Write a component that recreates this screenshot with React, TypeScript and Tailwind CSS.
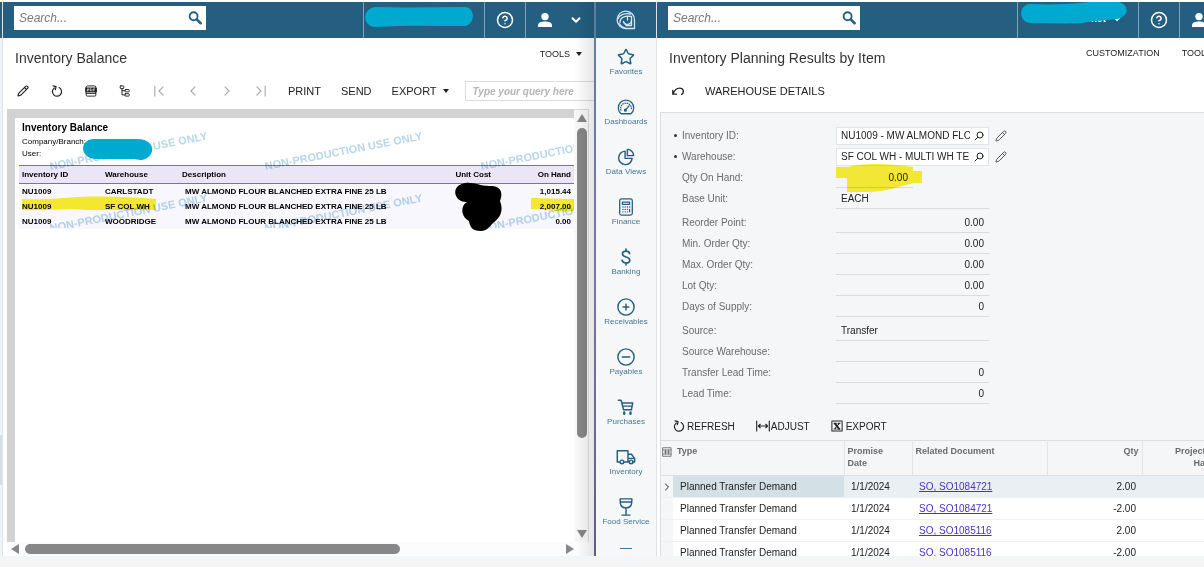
import type { ReactNode } from "react";
import { ChevronDown, ChevronRight, CircleHelp, Pencil, Star } from "lucide-react";

const reportRows = [
  { id: "NU1009", warehouse: "CARLSTADT", description: "MW ALMOND FLOUR BLANCHED EXTRA FINE 25 LB", onHand: "1,015.44" },
  { id: "NU1009", warehouse: "SF COL WH", description: "MW ALMOND FLOUR BLANCHED EXTRA FINE 25 LB", onHand: "2,007.00" },
  { id: "NU1009", warehouse: "WOODRIDGE", description: "MW ALMOND FLOUR BLANCHED EXTRA FINE 25 LB", onHand: "0.00" },
];

const planningRows = [
  { type: "Planned Transfer Demand", date: "1/1/2024", doc: "SO, SO1084721", qty: "2.00" },
  { type: "Planned Transfer Demand", date: "1/1/2024", doc: "SO, SO1084721", qty: "-2.00" },
  { type: "Planned Transfer Demand", date: "1/1/2024", doc: "SO, SO1085116", qty: "2.00" },
  { type: "Planned Transfer Demand", date: "1/1/2024", doc: "SO, SO1085116", qty: "-2.00" },
];

const watermarks = [
  "left-[36px] top-[42px]",
  "left-[251px] top-[42px]",
  "left-[467px] top-[42px]",
  "left-[36px] top-[104px]",
  "left-[251px] top-[104px]",
  "left-[467px] top-[104px]",
];

function Line({ children, className = "h-[18px] w-[18px]", width = 1.6 }: { children: ReactNode; className?: string; width?: number }) {
  return (
    <svg
      viewBox="0 0 20 20"
      className={className}
      fill="none"
      stroke="currentColor"
      strokeWidth={width}
      strokeLinecap="round"
      strokeLinejoin="round"
      aria-hidden="true"
    >
      {children}
    </svg>
  );
}

function Caret() {
  return (
    <svg viewBox="0 0 6 4" className="h-1 w-1.5" aria-hidden="true">
      <path d="M0 0h6L3 4z" fill="currentColor" />
    </svg>
  );
}

function RefreshGlyph() {
  return (
    <Line className="h-3 w-3" width={2}>
      <path d="M13.500 4.300a7.600 7.600 0 1 1-8 .6" />
      <path d="M3.500 1.500l5 1.200-1.300 5" />
    </Line>
  );
}

function UserGlyph() {
  return (
    <svg viewBox="0 0 16 16" className="h-4 w-4" fill="currentColor" aria-hidden="true">
      <circle cx="8" cy="4.6" r="3.7" />
      <path d="M1 15v-1.6C1 10.600 4.500 9.600 8 9.600s7 1 7 3.800V15z" />
    </svg>
  );
}

const menu = [
  { label: "Favorites", icon: <Star className="h-[18px] w-[18px]" strokeWidth={2} /> },
  {
    label: "Dashboards",
    icon: (
      <Line width={1.4}>
        <path d="M4.500 17.500h11A8.600 8.600 0 1 0 4.500 17.500z" />
        <path d="M4.300 13.500a6 6 0 1 1 11.400 0" strokeDasharray="0.6 1.900" />
        <path d="M9.500 13.500l4-5" />
        <circle cx="9.300" cy="13.500" r="1" />
      </Line>
    ),
  },
  {
    label: "Data Views",
    icon: (
      <Line>
        <path d="M9 3.500a7.500 7.500 0 1 0 7.800 8H9z" />
        <path d="M11.500 1.500a7.300 7.300 0 0 1 7 7h-7z" />
      </Line>
    ),
  },
  {
    label: "Finance",
    icon: (
      <Line width={1.4}>
        <rect x="3" y="1" width="14" height="18" rx="2" />
        <path d="M6 4.500h8v2.500H6z" />
        <path d="M6.500 10h.2M9 10h.2M11.500 10h.2M14 10h.2M6.500 12.700h.2M9 12.700h.2M11.500 12.700h.2M6.500 15.400h.2M9 15.400h.2M11.500 15.400h.2M14 12.700v2.700" />
      </Line>
    ),
  },
  {
    label: "Banking",
    icon: (
      <Line width={1.8}>
        <path d="M14 6.200C13.600 4.300 12.200 3.500 10 3.500c-2.400 0-4 1.100-4 3 0 4.500 8.200 2.300 8.200 7 0 2-1.700 3.100-4.200 3.100-2.400 0-4-1-4.300-3.100M10 1.200v2.300M10 16.600v2.300" />
      </Line>
    ),
  },
  {
    label: "Receivables",
    icon: (
      <Line>
        <circle cx="10" cy="10" r="9" />
        <path d="M6.800 10h6.400M10 6.800v6.400" />
      </Line>
    ),
  },
  {
    label: "Payables",
    icon: (
      <Line>
        <circle cx="10" cy="10" r="9" />
        <path d="M5.800 10h8.400" />
      </Line>
    ),
  },
  {
    label: "Purchases",
    icon: (
      <Line>
        <path d="M1.500 2.500h3l2.800 10.500h9M5.200 5.500h12.300l-1.500 7.500M6 9h10.500" />
        <path d="M8 16v1.500M15 16v1.500" strokeWidth="2.600" />
      </Line>
    ),
  },
  {
    label: "Inventory",
    icon: (
      <Line className="h-[18px] w-5">
        <path d="M3.500 15.500H.3V3h11.900v12.500H7.500M12.200 7h3.800l3.600 4.500v4h-1.900M12.200 15.500h1.500M12.500 11.500h6.500" />
        <circle cx="5.500" cy="15.500" r="2" />
        <circle cx="15.700" cy="15.500" r="2" />
      </Line>
    ),
  },
  {
    label: "Food Service",
    icon: (
      <Line>
        <path d="M3.500 1h13c.2 6-.5 10-6.500 10S3.300 7 3.500 1zM4 4.500h12M10 11v7.500M5.500 19h9" />
      </Line>
    ),
  },
];

function TopBar({ name, children }: { name: string; children: ReactNode }) {
  return (
    <header className="flex h-9 shrink-0 items-stretch bg-[#245f82] text-white">
      <div className="flex flex-1 items-center pl-[11px]">
        <div className="mb-1 flex h-6 w-48 items-center bg-white pr-1 text-[#245f82]">
          <input
            aria-label={name}
            placeholder="Search..."
            className="min-w-0 flex-1 bg-transparent pl-[5px] text-[12px] italic text-gray-700 outline-none placeholder:text-[#777]"
          />
          <button type="button" aria-label="Run search">
            <Line className="h-3.5 w-3.5" width={2.6}>
              <circle cx="8" cy="7.500" r="5.700" />
              <path d="M12.500 12l5.500 5.500" strokeWidth="3.600" />
            </Line>
          </button>
        </div>
      </div>
      <div className="relative w-[121px] border-l border-[#7fa3b8]">{children}</div>
      <button type="button" aria-label="Help" className="flex w-[41px] items-center justify-center border-l border-[#7fa3b8]">
        <CircleHelp className="h-[18px] w-[18px]" strokeWidth={2} />
      </button>
      <button type="button" aria-label="Account" className="flex w-[69px] items-center border-l border-[#7fa3b8] pl-[11px]">
        <UserGlyph />
        <ChevronDown className="ml-4 h-3.5 w-3.5" strokeWidth={3.4} />
      </button>
    </header>
  );
}

function ReportPage() {
  return (
    <div className="relative min-w-0 flex-1 overflow-hidden bg-white">
      <div className="h-[47px] pl-[7px] pt-1">
        <h2 className="text-[10px] font-bold leading-3">Inventory Balance</h2>
        <p className="mt-0.5 text-[8px] leading-3">Company/Branch:</p>
        <p className="text-[8px] leading-3">User:</p>
      </div>
      <table className="ml-1 w-[calc(100%-4px)] table-fixed text-left text-[8px] font-bold leading-[15px]">
        <colgroup>
          <col className="w-[83px]" />
          <col className="w-[77px]" />
          <col />
          <col className="w-[60px]" />
          <col className="w-[80px]" />
        </colgroup>
        <thead>
          <tr className="h-[18px] border-y border-[#7d6bbd] bg-[#eae6f8]">
            <th className="pl-[3px]">Inventory ID</th>
            <th className="pl-[3px]">Warehouse</th>
            <th className="pl-[3px]">Description</th>
            <th className="pr-[3px] text-right">Unit Cost</th>
            <th className="pr-[3px] text-right">On Hand</th>
          </tr>
        </thead>
        <tbody>
          {reportRows.map((row) => (
            <tr key={row.warehouse} className="bg-[#f7f7fd]">
              <td className="pl-[3px]">{row.id}</td>
              <td className="pl-[3px]">{row.warehouse}</td>
              <td className="pl-1.5">{row.description}</td>
              <td />
              <td className="pr-[3px] text-right">{row.onHand}</td>
            </tr>
          ))}
        </tbody>
      </table>

      {/* watermark, tiled over the printed band only */}
      <div className="pointer-events-none absolute inset-x-0 top-0 h-[110px] overflow-hidden mix-blend-multiply">
        {watermarks.map((place) => (
          <span
            key={place}
            className={`absolute origin-bottom-left rotate-[-11deg] whitespace-nowrap text-[11px] font-bold leading-3 text-[#b8d6ee] ${place}`}
          >
            NON-PRODUCTION USE ONLY
          </span>
        ))}
      </div>

      {/* marker strokes and redactions */}
      <svg className="pointer-events-none absolute left-0 top-0 h-28 w-40 mix-blend-multiply" viewBox="0 0 160 112" aria-hidden="true">
        <path d="M7 81C30 82 45 80 65 79c25-1 50 0 76 2v11H72c-20-2-40 1-65 0z" fill="#fcf02f" />
      </svg>
      <svg className="pointer-events-none absolute left-0 top-0 h-14 w-40" viewBox="0 0 160 56" aria-hidden="true">
        <path d="M78 21h43c20-1 21 18 6 21-5 0-6-1-10-1H80c-15-1-16-19-2-20z" fill="#00a9d0" />
      </svg>
      <svg className="pointer-events-none absolute right-0 top-16 h-14 w-[134px]" viewBox="0 0 134 56" aria-hidden="true">
        <path
          d="M25 1c10-1 14 3 24 3 13-1 14 8 11 15 4 10 0 17-7 22-4 4-6 8-12 8-9 0-11-4-12-10-9-5-8-16-2-19-12 1-18-16-2-19z"
          fill="#000"
        />
      </svg>
      <svg className="pointer-events-none absolute right-0 top-20 h-4 w-11 mix-blend-multiply" viewBox="0 0 44 16" aria-hidden="true">
        <path d="M1 0c14 0 25 1 43 1v12c-12 2-20-1-43-2z" fill="#fcf02f" />
      </svg>
    </div>
  );
}

function InventoryBalance() {
  return (
    <section className="relative flex min-w-0 overflow-hidden bg-white">
      <div className="flex w-[3px] shrink-0 flex-col border-r border-[#dfe3e8] bg-[#f2f3f5]">
        <div className="h-9 bg-[#245f82]" />
        <div className="flex-[397]" />
        <div className="flex-[50] bg-[#d3e1e6]" />
        <div className="flex-[71]" />
      </div>
      <div className="flex min-w-0 flex-1 flex-col">
        <TopBar name="Search inventory">
          <svg className="absolute left-px top-1 h-6 w-28" viewBox="0 0 112 24" aria-hidden="true">
            <path d="M10 1c30 1 60 0 90 0 10 0 11 17 0 19-30 0-60-1-90 1C-3 20-3 3 10 1z" fill="#00a9d0" />
          </svg>
        </TopBar>
        <div className="flex h-10 justify-between pl-3 pr-3">
          <h1 className="text-[14px] leading-10 text-[#333]">Inventory Balance</h1>
          <button type="button" className="flex items-center gap-1.5 self-start text-[9px] leading-8 text-[#222]">
            TOOLS <Caret />
          </button>
        </div>
        <div className="flex h-[31px] items-start text-[11px] text-[#222]">
          <div className="flex h-[26px] items-center gap-5 pl-[13px]">
            <button type="button" aria-label="Edit" className="flex w-3.5 justify-center">
              <Pencil className="h-3 w-3" strokeWidth={2.2} />
            </button>
            <button type="button" aria-label="Refresh" className="flex w-3.5 justify-center">
              <RefreshGlyph />
            </button>
            <button type="button" aria-label="View PDF" className="flex w-3.5 justify-center">
              <Line className="h-3 w-3" width={1.6}>
                <path d="M2 12V3.500A2 2 0 0 1 4 1.500h12a2 2 0 0 1 2 2V17a1.500 1.500 0 0 1-1.500 1.500h-13A1.500 1.500 0 0 1 2 17zM2 14h16" />
                <path d="M1 5h18v6.500H1z" fill="currentColor" />
                <path d="M4 10V6.500h2.200v2H4M8.800 6.500V10c3 0 3-3.500 0-3.500M13.500 10V6.500H16M13.500 8.300h2" stroke="#fff" strokeWidth="1" />
              </Line>
            </button>
            <button type="button" aria-label="Groups" className="flex w-3.5 justify-center">
              <Line className="h-3 w-3" width={1.6}>
                <rect x="2" y="1.500" width="6" height="4.500" rx="1" />
                <rect x="10" y="7.500" width="7" height="4" rx="1" />
                <rect x="10" y="14.500" width="7" height="4" rx="1" />
                <path d="M5 6v10.500h5M5 9.500h5" />
              </Line>
            </button>
            {[
              { label: "First page", path: "M4 3v14M16 4l-6 6 6 6" },
              { label: "Previous page", path: "M13 4l-6 6 6 6" },
              { label: "Next page", path: "M7 4l6 6-6 6" },
              { label: "Last page", path: "M4 4l6 6-6 6M16 3v14" },
            ].map((item) => (
              <button key={item.label} type="button" aria-label={item.label} className="text-[#aaa]">
                <Line className="h-3.5 w-3.5">
                  <path d={item.path} />
                </Line>
              </button>
            ))}
          </div>
          <div className="flex h-[26px] min-w-0 flex-1 items-center gap-5 pl-5">
            <button type="button">PRINT</button>
            <button type="button">SEND</button>
            <button type="button" className="flex items-center gap-1.5">
              EXPORT <Caret />
            </button>
            <input
              aria-label="Query"
              placeholder="Type your query here"
              className="-ml-1 h-5 min-w-0 flex-1 border border-r-0 border-[#ddd] pl-[7px] text-[10px] font-bold italic outline-none placeholder:text-[#b5b5b5]"
            />
          </div>
        </div>
        <div className="ml-1 mr-[5px] flex min-h-0 flex-1">
          <div className="flex min-w-0 flex-1 bg-[#d2d2d2] pl-2 pt-[9px]">
            <ReportPage />
          </div>
          <div className="flex w-[15px] shrink-0 flex-col items-center border-r border-t border-[#ddd] bg-[#fafafa] pb-1 pl-0.5 pt-1 text-[#878787]">
            <svg viewBox="0 0 10 8" className="h-2 w-2.5" aria-hidden="true">
              <path d="M5 0l5 8H0z" fill="currentColor" />
            </svg>
            <div className="mt-1.5 flex w-2.5 flex-1 flex-col">
              <div className="flex-[77] rounded-full bg-[#878787]" />
              <div className="flex-[23]" />
            </div>
            <svg viewBox="0 0 10 8" className="h-2 w-2.5" aria-hidden="true">
              <path d="M0 0h10L5 8z" fill="currentColor" />
            </svg>
          </div>
        </div>
        <div className="ml-1 mr-5 flex h-3.5 shrink-0 items-center gap-1.5 bg-[#fcfcfc] pl-1 text-[#878787]">
          <svg viewBox="0 0 8 10" className="h-2.5 w-2" aria-hidden="true">
            <path d="M8 0v10L0 5z" fill="currentColor" />
          </svg>
          <div className="flex h-2.5 flex-1">
            <div className="flex-[70] rounded-full bg-[#878787]" />
            <div className="flex-[30]" />
          </div>
          <svg viewBox="0 0 8 10" className="h-2.5 w-2" aria-hidden="true">
            <path d="M0 0v10l8-5z" fill="currentColor" />
          </svg>
        </div>
      </div>
      <div className="pointer-events-none absolute inset-y-0 right-0 w-5 bg-gradient-to-r from-transparent to-black/10" />
    </section>
  );
}

function Field({ id, label, value, align = "right" }: { id: string; label: string; value: string; align?: "left" | "right" }) {
  return (
    <div className="flex h-[21px] items-center">
      <label htmlFor={id} className="w-[154px] text-[#6b6b6b]">
        {label}
      </label>
      <input
        id={id}
        defaultValue={value}
        className={`h-5 w-[153px] border-b border-[#d9dbdd] bg-transparent px-[5px] outline-none ${align === "right" ? "text-right" : "text-left"}`}
      />
    </div>
  );
}

function LookupField({ id, label, value }: { id: string; label: string; value: string }) {
  return (
    <div className="-ml-2 flex h-[21px] items-center">
      <label htmlFor={id} className="flex w-[162px] items-center gap-[5px] text-[#6b6b6b]">
        <span className="h-[3px] w-[3px] rounded-full bg-[#333]" />
        {label}
      </label>
      <div className="flex h-[18px] w-[153px] items-center border border-[#e1e3e6] bg-white">
        <input id={id} defaultValue={value} className="ml-1 min-w-0 flex-1 bg-transparent outline-none" />
        <button type="button" aria-label={`Look up ${label}`} className="px-1">
          <Line className="h-2.5 w-2.5" width={2}>
            <circle cx="12" cy="8" r="6" />
            <path d="M7.500 12.500L2 18" />
          </Line>
        </button>
      </div>
      <button type="button" aria-label={`Edit ${label}`} className="ml-1.5 text-[#444]">
        <Pencil className="h-3 w-3" strokeWidth={1.8} />
      </button>
    </div>
  );
}

function PlanningTable() {
  return (
    <table className="w-full table-fixed text-left text-[10px]">
      <colgroup>
        <col className="w-3" />
        <col className="w-[171px]" />
        <col className="w-[68px]" />
        <col className="w-[135px]" />
        <col className="w-[95px]" />
        <col className="w-[80px]" />
        <col />
      </colgroup>
      <thead>
        <tr className="h-[35px] border-y border-[#dcdfe2] align-top text-[9px] leading-3 text-[#6b6b6b]">
          <th className="pl-px pt-1.5">
            <Line className="h-2.5 w-2.5" width={1.8}>
              <path d="M2 1.500h16v17H2zM2 6h16M2 14h16M7 6v8M13 6v8M5 10h10" />
            </Line>
          </th>
          <th className="pl-1 pt-1">Type</th>
          <th className="border-l border-[#e3e6e8] pl-[3px] pr-5 pt-1">Promise Date</th>
          <th className="border-l border-[#e3e6e8] pl-[3px] pt-1">Related Document</th>
          <th className="border-l border-[#e3e6e8] pr-[3px] pt-1 text-right">Qty</th>
          <th className="border-l border-[#e3e6e8] pl-4 pr-1.5 pt-1 text-right">Projected Hand</th>
          <th />
        </tr>
      </thead>
      <tbody>
        {planningRows.map((row, index) => (
          <tr key={index} className={`h-[22px] border-b border-[#eef0f2] ${index === 0 ? "bg-[#e9eff2]" : "bg-white"}`}>
            <td className="bg-[#f5f6f8]">{index === 0 && <ChevronRight className="h-3 w-3" strokeWidth={2} />}</td>
            <td className={`pl-[7px] ${index === 0 ? "bg-[#d3e0e5]" : ""}`}>{row.type}</td>
            <td className="pl-[7px]">{row.date}</td>
            <td className="pl-[7px]">
              <a href="#document" className="text-[#4b32c3] underline">
                {row.doc}
              </a>
            </td>
            <td className="pr-1.5 text-right">{row.qty}</td>
            <td />
            <td />
          </tr>
        ))}
      </tbody>
    </table>
  );
}

function InventoryPlanning() {
  return (
    <section className="flex min-w-0 overflow-hidden bg-white">
      <aside className="flex w-[61px] shrink-0 flex-col overflow-hidden border-r border-[#dfe3e8] bg-[#f5f7f9]">
        <div className="flex h-9 shrink-0 items-center justify-center bg-[#245f82] text-[#d7e5ed]">
          <Line className="h-5 w-5" width={1.3}>
            <path d="M18.500 18.500V10A8.700 8.700 0 1 0 10 18.500z" />
            <path d="M4 12.500C4 7 9 5.500 15.500 6.500V10c0 5-7 6-8 1.500" />
            <path d="M1.800 9C3.500 4.500 9 2.800 14.500 4M11.500 6.500V10M3 13.500c1.500 2.500 3.500 4 7 5M15.500 10v5.500H10" />
          </Line>
        </div>
        <nav className="flex flex-col pt-2.5">
          {menu.map((item) => (
            <a key={item.label} href="#menu" className="flex h-[50px] shrink-0 flex-col items-center gap-px text-[8px] leading-[10px] text-[#477695]">
              <span className="text-[#245f82]">{item.icon}</span>
              {item.label}
            </a>
          ))}
          <span className="mx-auto h-px w-3 shrink-0 bg-[#477695]" />
        </nav>
      </aside>
      <div className="min-w-0 flex-1">
        {/* the page is wider than its window and runs off to the right */}
        <div className="flex h-full w-[calc(100%+44px)] flex-col">
          <TopBar name="Search planning">
            <span className="absolute left-[73px] top-[11px] flex items-center gap-1.5 text-[10px] font-bold leading-3">
              net <ChevronDown className="h-2.5 w-2.5" strokeWidth={4} />
            </span>
            <svg className="absolute -top-0.5 left-[3px] h-6 w-[106px]" viewBox="0 0 106 24" aria-hidden="true">
              <path d="M9 4c25 1 45 0 68-3h18c14 3 14 15 1 18-13 2-22 1-34 4-18 1-35 0-52 0C-3 22-3 5 9 4z" fill="#00a9d0" />
            </svg>
          </TopBar>
          <div className="flex h-10 shrink-0 justify-between pl-3 pr-9">
            <h1 className="text-[14px] leading-10 text-[#333]">Inventory Planning Results by Item</h1>
            <div className="flex h-8 items-center gap-[22px] text-[9px] text-[#222]">
              <button type="button">CUSTOMIZATION</button>
              <button type="button">TOOLS</button>
            </div>
          </div>
          <div className="flex h-[34px] shrink-0 items-start pl-[14px] text-[11px] text-[#222]">
            <div className="flex h-[26px] items-center gap-5">
              <button type="button" aria-label="Undo" className="w-3.5">
                <Line className="h-3.5 w-3.5" width={1.8}>
                  <path d="M2.500 9v5.500H8M3 14C5 8.500 8 6 12.500 6c5.500 0 7 6 2.500 9" />
                </Line>
              </button>
              <button type="button">WAREHOUSE DETAILS</button>
            </div>
          </div>
          <div className="ml-[3px] min-h-0 flex-1 overflow-hidden border-l border-t border-[#dcdfe2] bg-[#f5f6f8] text-[10px] text-[#222]">
            <form className="pl-[21px] pt-3">
              <LookupField id="inventory" label="Inventory ID:" value="NU1009 - MW ALMOND FLOUR" />
              <LookupField id="warehouse" label="Warehouse:" value="SF COL WH - MULTI WH TEST" />
              <div className="relative flex h-[21px] items-center">
                <label htmlFor="on-hand" className="w-[154px] text-[#6b6b6b]">
                  Qty On Hand:
                </label>
                <input
                  id="on-hand"
                  defaultValue="0.00"
                  className="h-5 w-[77px] border-b border-[#d9dbdd] bg-transparent px-[5px] text-right outline-none"
                />
                <svg className="pointer-events-none absolute -top-1 left-[154px] h-8 w-[88px] mix-blend-multiply" viewBox="0 0 88 32" aria-hidden="true">
                  <path d="M0 4h12c14-4 38-4 65 0v4h9v12h-9c-14 4-28 9-47 9H11V15H0z" fill="#fcf035" />
                </svg>
              </div>
              <Field id="unit" label="Base Unit:" value="EACH" align="left" />
              <div className="mt-[3px]">
                <Field id="reorder" label="Reorder Point:" value="0.00" />
                <Field id="min-order" label="Min. Order Qty:" value="0.00" />
                <Field id="max-order" label="Max. Order Qty:" value="0.00" />
                <Field id="lot" label="Lot Qty:" value="0.00" />
                <Field id="days" label="Days of Supply:" value="0" />
              </div>
              <div className="mt-[3px]">
                <Field id="source" label="Source:" value="Transfer" align="left" />
                <Field id="source-warehouse" label="Source Warehouse:" value="" />
                <Field id="transfer-lead" label="Transfer Lead Time:" value="0" />
                <Field id="lead" label="Lead Time:" value="0" />
              </div>
            </form>
            <div className="mt-2 flex h-7 items-center gap-[21px] pl-3">
              <button type="button" className="flex items-center gap-0.5">
                <RefreshGlyph />
                REFRESH
              </button>
              <button type="button" className="flex items-center gap-px">
                <Line className="h-3.5 w-3.5">
                  <path d="M1 3v14M19 3v14M3.500 10h13M6 7.500L3.500 10 6 12.500M14 7.500l2.500 2.500-2.500 2.500" />
                </Line>
                ADJUST
              </button>
              <button type="button" className="flex items-center gap-[3px]">
                <Line className="h-3 w-3" width={1.7}>
                  <path d="M1.500 1.500h17v17h-17z" />
                  <path d="M6.500 6l7 8.500" strokeWidth="3" />
                  <path d="M13.500 6l-7 8.500M5 5.500h4M11.500 5.500H15M5 15h3.500M11 15h4" />
                </Line>
                EXPORT
              </button>
            </div>
            <PlanningTable />
          </div>
        </div>
      </div>
    </section>
  );
}

export default function App() {
  return (
    <div className="flex h-screen flex-col overflow-hidden bg-[#f4f5f7] pb-[11px] font-['Liberation_Sans',Arial,sans-serif] text-black">
      <main className="grid min-h-0 flex-1 grid-cols-[594fr_2px_608fr] grid-rows-[minmax(0,1fr)] border-t-2 border-white">
        <InventoryBalance />
        <div className="bg-gradient-to-b from-[#5c7f99] via-[#7a74ac] to-[#625d80]" />
        <InventoryPlanning />
      </main>
    </div>
  );
}
